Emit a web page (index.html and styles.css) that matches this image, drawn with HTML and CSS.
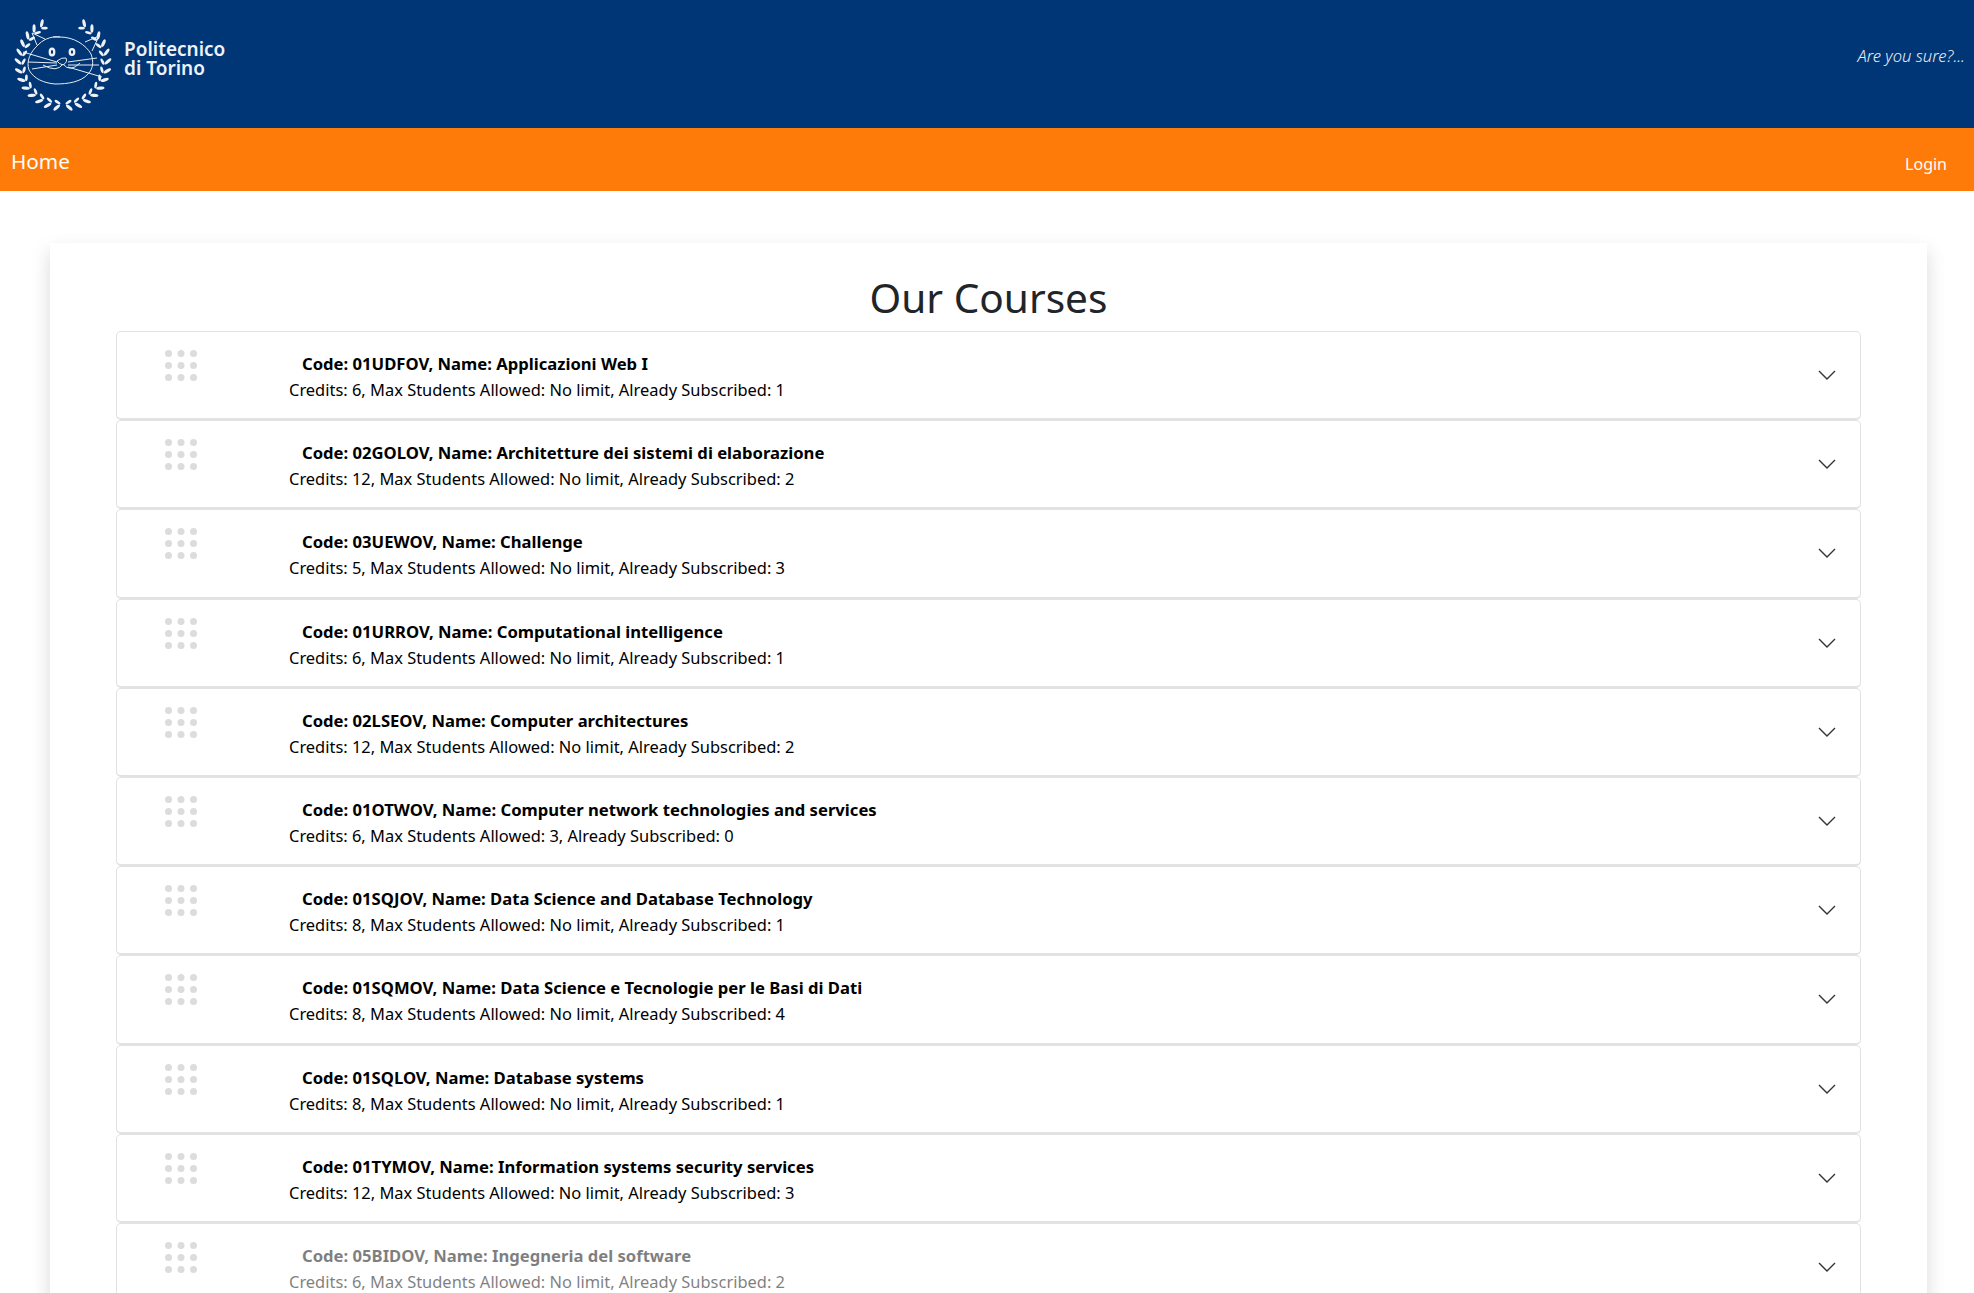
FILE: index.html
```html
<!DOCTYPE html>
<html>
<head>
  <meta charset="UTF-8" />
  <title>Our Courses</title>
  <link rel="stylesheet" href="styles.css">
</head>
<body>
  <svg class="defs" width="0" height="0">
    <symbol id="grip" viewBox="0 0 33 31">
      <circle cx="3.5" cy="3.5" r="3.5"/><circle cx="16" cy="3.5" r="3.5"/><circle cx="28.5" cy="3.5" r="3.5"/>
      <circle cx="3.5" cy="15.5" r="3.5"/><circle cx="16" cy="15.5" r="3.5"/><circle cx="28.5" cy="15.5" r="3.5"/>
      <circle cx="3.5" cy="27.5" r="3.5"/><circle cx="16" cy="27.5" r="3.5"/><circle cx="28.5" cy="27.5" r="3.5"/>
    </symbol>
    <symbol id="chevron" viewBox="0 0 18 11">
      <path d="M1 1l8 8 8-8" fill="none" stroke="currentColor" stroke-width="1.4"/>
    </symbol>
    <g id="sprig">
      <ellipse cx="63" cy="18" rx="1.6" ry="4.2" transform="rotate(40 63 18)"/>
      <ellipse cx="63" cy="23.5" rx="1.4" ry="3.4" transform="rotate(115 63 23.5)"/>
    </g>
    <g id="laurel-side">
      <use href="#sprig" transform="rotate(-28 63 63)"/>
      <use href="#sprig" transform="rotate(-40 63 63)"/>
      <use href="#sprig" transform="rotate(-52 63 63)"/>
      <use href="#sprig" transform="rotate(-64 63 63)"/>
      <use href="#sprig" transform="rotate(-76 63 63)"/>
      <use href="#sprig" transform="rotate(-88 63 63)"/>
      <use href="#sprig" transform="rotate(-100 63 63)"/>
      <use href="#sprig" transform="rotate(-112 63 63)"/>
      <use href="#sprig" transform="rotate(-124 63 63)"/>
      <use href="#sprig" transform="rotate(-136 63 63)"/>
      <use href="#sprig" transform="rotate(-148 63 63)"/>
      <use href="#sprig" transform="rotate(-160 63 63)"/>
      <use href="#sprig" transform="rotate(-172 63 63)"/>
    </g>
  </svg>

  <header class="top-bar">
    <a class="brand" href="#">
      <svg class="logo" viewBox="0 0 124 128">
        <g fill="#eef2f7">
          <use href="#laurel-side"/>
          <use href="#laurel-side" transform="matrix(-1 0 0 1 126 0)"/>
        </g>
        <g fill="none" stroke="#e6ebf2" stroke-width="1">
          <path d="M39 44C45 38 54 36 60 37c14 0 26 8 31 17 3 8 2 15-3 20-7 8-20 10-33 10-11-1-21-5-26-14-3-9 1-18 10-26"/>
          <path d="M45 39L32 33l5 12M53 37h7"/>
          <path d="M85 42l14-6-7 15"/>
          <path d="M23 52l34 10M28 62l29 1M32 69l25-4"/>
          <path d="M68 62l29-4M68 65l31 0M68 67l34 10"/>
          <path d="M43 65q14 8 20-1q7 9 17-1"/>
          <path d="M57 61q5-4 9-3q2 4-3 7q-4-1-6-4z"/>
        </g>
        <ellipse cx="52" cy="52" rx="3.4" ry="4.6" fill="#eef2f7"/>
        <ellipse cx="72" cy="52" rx="3.4" ry="4" fill="#eef2f7"/>
        <ellipse cx="52" cy="52" rx="1.1" ry="2" fill="#003676"/>
        <ellipse cx="72" cy="52" rx="1.1" ry="1.8" fill="#003676"/>
      </svg>
      <span class="brand-name">Politecnico<br>di Torino</span>
    </a>
    <span class="motto">Are you sure?...</span>
  </header>

  <nav class="nav-bar">
    <a class="nav-home" href="#">Home</a>
    <a class="nav-login" href="#">Login</a>
  </nav>

  <main class="page">
    <section class="card">
      <h1>Our Courses</h1>
      <ul class="courses">
        <li class="course">
          <svg class="grip"><use href="#grip"/></svg>
          <div class="course-text">
            <div class="course-title">Code: 01UDFOV, Name: Applicazioni Web I</div>
            <div class="course-info">Credits: 6, Max Students Allowed: No limit, Already Subscribed: 1</div>
          </div>
          <svg class="chevron"><use href="#chevron"/></svg>
        </li>
        <li class="course">
          <svg class="grip"><use href="#grip"/></svg>
          <div class="course-text">
            <div class="course-title">Code: 02GOLOV, Name: Architetture dei sistemi di elaborazione</div>
            <div class="course-info">Credits: 12, Max Students Allowed: No limit, Already Subscribed: 2</div>
          </div>
          <svg class="chevron"><use href="#chevron"/></svg>
        </li>
        <li class="course">
          <svg class="grip"><use href="#grip"/></svg>
          <div class="course-text">
            <div class="course-title">Code: 03UEWOV, Name: Challenge</div>
            <div class="course-info">Credits: 5, Max Students Allowed: No limit, Already Subscribed: 3</div>
          </div>
          <svg class="chevron"><use href="#chevron"/></svg>
        </li>
        <li class="course">
          <svg class="grip"><use href="#grip"/></svg>
          <div class="course-text">
            <div class="course-title">Code: 01URROV, Name: Computational intelligence</div>
            <div class="course-info">Credits: 6, Max Students Allowed: No limit, Already Subscribed: 1</div>
          </div>
          <svg class="chevron"><use href="#chevron"/></svg>
        </li>
        <li class="course">
          <svg class="grip"><use href="#grip"/></svg>
          <div class="course-text">
            <div class="course-title">Code: 02LSEOV, Name: Computer architectures</div>
            <div class="course-info">Credits: 12, Max Students Allowed: No limit, Already Subscribed: 2</div>
          </div>
          <svg class="chevron"><use href="#chevron"/></svg>
        </li>
        <li class="course">
          <svg class="grip"><use href="#grip"/></svg>
          <div class="course-text">
            <div class="course-title">Code: 01OTWOV, Name: Computer network technologies and services</div>
            <div class="course-info">Credits: 6, Max Students Allowed: 3, Already Subscribed: 0</div>
          </div>
          <svg class="chevron"><use href="#chevron"/></svg>
        </li>
        <li class="course">
          <svg class="grip"><use href="#grip"/></svg>
          <div class="course-text">
            <div class="course-title">Code: 01SQJOV, Name: Data Science and Database Technology</div>
            <div class="course-info">Credits: 8, Max Students Allowed: No limit, Already Subscribed: 1</div>
          </div>
          <svg class="chevron"><use href="#chevron"/></svg>
        </li>
        <li class="course">
          <svg class="grip"><use href="#grip"/></svg>
          <div class="course-text">
            <div class="course-title">Code: 01SQMOV, Name: Data Science e Tecnologie per le Basi di Dati</div>
            <div class="course-info">Credits: 8, Max Students Allowed: No limit, Already Subscribed: 4</div>
          </div>
          <svg class="chevron"><use href="#chevron"/></svg>
        </li>
        <li class="course">
          <svg class="grip"><use href="#grip"/></svg>
          <div class="course-text">
            <div class="course-title">Code: 01SQLOV, Name: Database systems</div>
            <div class="course-info">Credits: 8, Max Students Allowed: No limit, Already Subscribed: 1</div>
          </div>
          <svg class="chevron"><use href="#chevron"/></svg>
        </li>
        <li class="course">
          <svg class="grip"><use href="#grip"/></svg>
          <div class="course-text">
            <div class="course-title">Code: 01TYMOV, Name: Information systems security services</div>
            <div class="course-info">Credits: 12, Max Students Allowed: No limit, Already Subscribed: 3</div>
          </div>
          <svg class="chevron"><use href="#chevron"/></svg>
        </li>
        <li class="course course-fading">
          <svg class="grip"><use href="#grip"/></svg>
          <div class="course-text">
            <div class="course-title">Code: 05BIDOV, Name: Ingegneria del software</div>
            <div class="course-info">Credits: 6, Max Students Allowed: No limit, Already Subscribed: 2</div>
          </div>
          <svg class="chevron"><use href="#chevron"/></svg>
        </li>
      </ul>
    </section>
  </main>
</body>
</html>
```

FILE: styles.css
```css
* {
  box-sizing: border-box;
}
html, body {
  height: 100vh;
  overflow: hidden;
}
body {
  margin: 0;
  background: #fff;
  color: #212529;
  font-family: "Noto Sans", "Open Sans", sans-serif;
}
a {
  color: inherit;
  text-decoration: none;
}
.defs {
  position: absolute;
}

/* header */
.top-bar {
  height: 128px;
  background: #003676;
  display: flex;
  justify-content: space-between;
}
.brand {
  display: flex;
  align-items: center;
  color: #eef2f7;
}
.logo {
  width: 124px;
  height: 128px;
}
.brand-name {
  font-size: 19px;
  font-weight: 600;
  line-height: 19px;
  margin-bottom: 10px;
}
.motto {
  color: #e6eef7;
  font-size: 16.6px;
  font-style: italic;
  font-weight: 300;
  padding: 44px 9px 0 0;
}

/* orange nav */
.nav-bar {
  height: 63px;
  background: #ff7b09;
  color: #fff;
  display: flex;
  justify-content: space-between;
  align-items: center;
  padding: 0 27px 0 11px;
}
.nav-home {
  font-size: 20.7px;
  padding-top: 2px;
}
.nav-login {
  font-size: 16px;
  padding-top: 8px;
}

/* course list */
.page {
  padding: 52px 47px 0 50px;
}
.card {
  background: #fff;
  box-shadow: 0 8px 18px rgba(0, 0, 0, .15);
  padding: 24px 66px 40px;
}
h1 {
  margin: 0;
  height: 64px;
  font-size: 40.6px;
  font-weight: 400;
  line-height: 62px;
  text-align: center;
}
.courses {
  list-style: none;
  margin: 0;
  padding: 0;
}
.course {
  height: 89.2px;
  border: 1px solid #e2e2e2;
  border-bottom-width: 2px;
  border-radius: 5px;
  display: flex;
  align-items: flex-start;
  color: #000;
}
.grip {
  width: 33px;
  height: 31px;
  margin: 18px 0 0 48px;
  fill: #dcdcdc;
}
.course-text {
  flex: 1;
  padding: 19px 0 0 91px;
  font-size: 16.45px;
  line-height: 26px;
}
.course-title {
  font-size: 16.65px;
  font-weight: 700;
  padding-left: 13px;
}
.chevron {
  width: 18px;
  height: 11px;
  margin: 38px 24px 0 0;
  color: #333;
}
.course-fading .course-text {
  opacity: .5;
}
```
